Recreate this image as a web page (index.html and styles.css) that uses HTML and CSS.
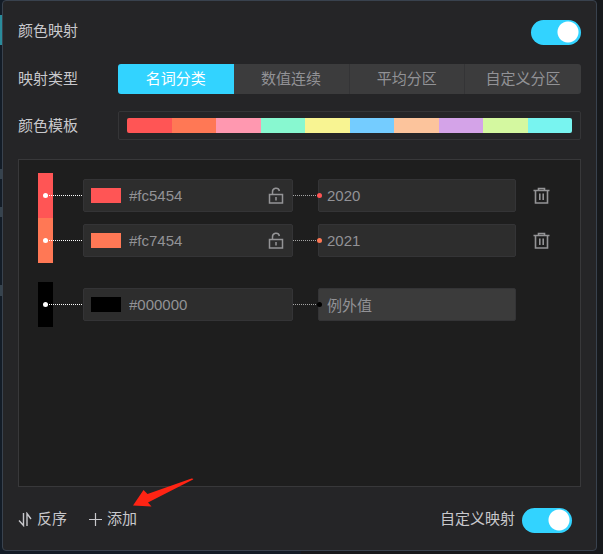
FILE: index.html
```html
<!DOCTYPE html>
<html lang="zh-CN">
<head>
<meta charset="utf-8">
<title>颜色映射</title>
<link rel="stylesheet" href="styles.css">
</head>
<body>
<svg class="defs" aria-hidden="true">
  <symbol id="lock" viewBox="0 0 16 18"><path d="M1.500 7.500h13v8.500h-13zM4.500 7.500V5a3.500 3.500 0 0 1 6.900-1M8 10v3.500" fill="none" stroke="currentColor" stroke-width="1.500"/></symbol>
  <symbol id="trash" viewBox="0 0 17 18"><path d="M.5 3.500h16M5.500 3v-1.500h6V3M2.500 4v12h12V4M6.800 6.500v6.500M10.200 6.500v6.500" fill="none" stroke="currentColor" stroke-width="1.600"/></symbol>
</svg>
<main class="panel">
  <div class="row row-head">
    <label class="label" for="mapping">颜色映射</label>
    <input class="switch" id="mapping" type="checkbox" role="switch" checked>
  </div>
  <div class="row row-type">
    <span class="label" id="type-label">映射类型</span>
    <div class="tabs" role="group" aria-labelledby="type-label">
      <button class="tab tab-active" type="button" aria-pressed="true">名词分类</button>
      <button class="tab" type="button">数值连续</button>
      <button class="tab" type="button">平均分区</button>
      <button class="tab" type="button">自定义分区</button>
    </div>
  </div>
  <div class="row row-template">
    <span class="label" id="template-label">颜色模板</span>
    <button class="template" type="button" aria-labelledby="template-label">
      <span class="palette">
        <i class="c1"></i><i class="c2"></i><i class="c3"></i><i class="c4"></i><i class="c5"></i><i class="c6"></i><i class="c7"></i><i class="c8"></i><i class="c9"></i><i class="c10"></i>
      </span>
    </button>
  </div>

  <section class="list">
    <div class="item red">
      <span class="strip"></span><span class="link link-start"></span>
      <div class="field"><span class="swatch"></span><input type="text" value="#fc5454" aria-label="颜色"><button class="icon-button" type="button" aria-label="锁定"><svg class="lock"><use href="#lock"/></svg></button></div>
      <span class="link link-end"></span>
      <div class="field"><input type="text" value="2020" aria-label="值"></div>
      <button class="icon-button" type="button" aria-label="删除"><svg class="trash"><use href="#trash"/></svg></button>
    </div>
    <div class="item orange">
      <span class="strip"></span><span class="link link-start"></span>
      <div class="field"><span class="swatch"></span><input type="text" value="#fc7454" aria-label="颜色"><button class="icon-button" type="button" aria-label="锁定"><svg class="lock"><use href="#lock"/></svg></button></div>
      <span class="link link-end"></span>
      <div class="field"><input type="text" value="2021" aria-label="值"></div>
      <button class="icon-button" type="button" aria-label="删除"><svg class="trash"><use href="#trash"/></svg></button>
    </div>
    <div class="item black">
      <span class="strip"></span><span class="link link-start"></span>
      <div class="field"><span class="swatch"></span><input type="text" value="#000000" aria-label="颜色"></div>
      <span class="link link-end"></span>
      <div class="field field-disabled"><input type="text" value="例外值" aria-label="值" readonly></div>
    </div>
  </section>

  <footer class="footer">
    <button class="action" type="button">
      <svg class="action-icon" viewBox="0 0 15 15"><path d="M1 8.500l4.500 5V1M9 14V1.500l4 5.500" fill="none" stroke="currentColor" stroke-width="1.400"/></svg>反序
    </button>
    <button class="action action-add" type="button">
      <svg class="action-icon" viewBox="0 0 15 15"><path d="M1 7.500h13M7.500 1v13" fill="none" stroke="currentColor" stroke-width="1.200"/></svg>添加
      <svg class="arrow" viewBox="0 0 61 29"><path d="M0 27.500L10.500 12L14.500 16L58.500.5Q61 .5 60 1.500L15 24.500L18.500 28.500Z" fill="#ff2414"/></svg>
    </button>
    <label class="custom" for="custom">自定义映射</label>
    <input class="switch" id="custom" type="checkbox" role="switch" checked>
  </footer>
</main>
</body>
</html>
```
FILE: styles.css
```css
* { box-sizing: border-box; }

body {
  margin: 0;
  padding: 0 6px 3px 2px;
  min-height: 100vh;
  display: flex;
  background:
    linear-gradient(#2a8c9c, #2a8c9c) 0 15px / 2px 30px no-repeat,
    linear-gradient(#36434e, #36434e) 0 169px / 2px 10px no-repeat,
    linear-gradient(#36434e, #36434e) 0 207px / 2px 10px no-repeat,
    linear-gradient(#36434e, #36434e) 0 285px / 2px 11px no-repeat,
    linear-gradient(90deg, #131c27 0 50%, #17191c 50%);
  color: #c8c8cc;
  font: 15px/22px "Liberation Sans", "Noto Sans CJK SC", sans-serif;
}

button, input {
  margin: 0;
  padding: 0;
  border: 0;
  background: none;
  color: inherit;
  font: inherit;
}

svg { display: block; }
.defs { position: absolute; width: 0; height: 0; }

.panel {
  flex: 1;
  min-width: 0;
  display: flex;
  flex-direction: column;
  padding: 19px 15px 17px;
  border: 1px solid #39424e;
  border-radius: 4px;
  background: #252527;
}

.row { display: flex; align-items: center; }
.row-head { align-items: flex-start; justify-content: space-between; margin-bottom: 19px; }
.row-type { margin-bottom: 17px; }
.row-template { margin-bottom: 19px; }
.label { flex: 0 0 100px; }

.switch {
  appearance: none;
  flex: none;
  width: 50px;
  height: 25px;
  border-radius: 13px;
  background: radial-gradient(circle at 37px 12px, #fff 10px, #32d3ff 11px);
}

.tabs {
  flex: 1;
  display: grid;
  grid-template-columns: repeat(4, 1fr);
  border-radius: 3px;
  overflow: hidden;
}
.tab {
  height: 30px;
  border-right: 1px solid #343436;
  background: #3c3c3d;
  color: #929296;
}
.tab:last-child { border-right: 0; }
.tab-active { border-right: 0; background: #32d3ff; color: #fff; }

.template {
  flex: 1;
  padding: 6px 8px;
  border: 1px solid #353537;
  border-radius: 2px;
}
.palette { display: flex; height: 15px; border-radius: 2px; overflow: hidden; }
.palette i { flex: 1; }
.c1 { background: #ff5555; }
.c2 { background: #ff7855; }
.c3 { background: #ff98b0; }
.c4 { background: #88f8d0; }
.c5 { background: #f8f492; }
.c6 { background: #74ccff; }
.c7 { background: #fcc49c; }
.c8 { background: #d4a3e8; }
.c9 { background: #d4f8a0; }
.c10 { background: #78f4f0; }

.list {
  flex: 1;
  padding: 13px 13px 13px 19px;
  border: 1px solid #38383a;
  background: #1e1e1e;
}
.item {
  display: grid;
  grid-template-columns: 15px 30px minmax(0, 210fr) 25px minmax(0, 198fr) 51px;
  align-items: center;
  height: 45px;
}
.red { --color: #ff5555; }
.orange { --color: #ff7855; }
.black { --color: #000; margin-top: 19px; }
.strip { align-self: stretch; background: var(--color); }

.link { position: relative; height: 1px; }
.link::before {
  content: "";
  position: absolute;
  top: 0;
  right: 0;
  left: 0;
  height: 1px;
  background: repeating-linear-gradient(90deg, #fff 0 1px, transparent 1px 2px);
}
.link::after {
  content: "";
  position: absolute;
  top: -2px;
  width: 5px;
  height: 5px;
  border-radius: 50%;
}
.link-start::before { left: -8px; }
.link-start::after { left: -10px; background: #fff; }
.link-end { z-index: 1; }
.link-end::before { opacity: 0.6; }
.link-end::after { right: -4px; background: var(--color); }

.field {
  display: flex;
  align-items: center;
  height: 33px;
  padding: 0 8px;
  border: 1px solid #343436;
  border-radius: 2px;
  background: #2d2d2d;
  color: #929296;
}
.field:has(.swatch) { padding-left: 7px; }
.field input { flex: 1; min-width: 0; width: 0; height: 31px; }
.field-disabled { background: #3b3b3b; }
.swatch { width: 30px; height: 15px; margin-right: 8px; background: var(--color); }
.icon-button { display: grid; place-items: center; color: #949496; }
.lock { width: 16px; height: 18px; }
.trash { width: 17px; height: 18px; }

.footer {
  display: flex;
  align-items: flex-start;
  margin-top: 21px;
  padding-right: 9px;
}
.action {
  position: relative;
  display: flex;
  align-items: center;
  gap: 4px;
  margin-right: 21px;
}
.action-icon { width: 15px; height: 15px; }
.arrow { position: absolute; top: -30px; left: 45px; width: 61px; height: 29px; }
.custom { margin-left: auto; margin-right: 7px; }
```
